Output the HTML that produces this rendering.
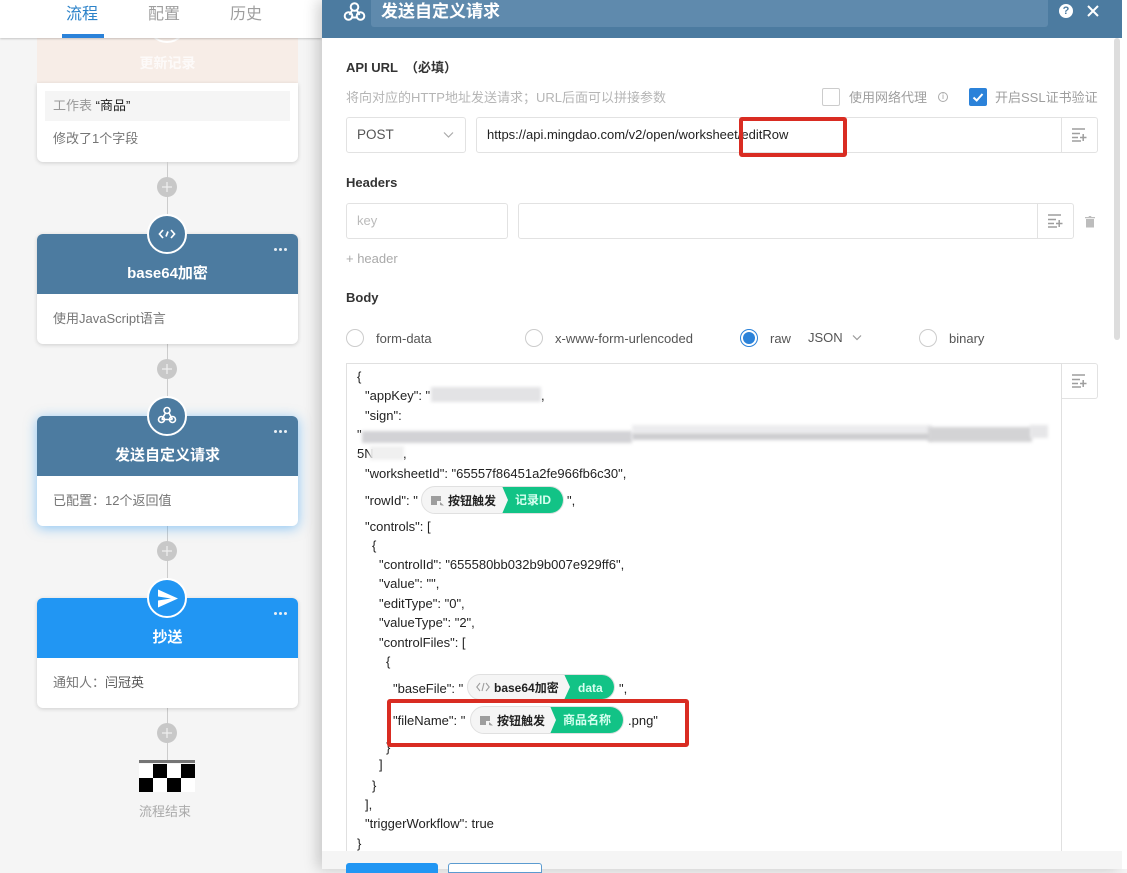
<!DOCTYPE html>
<html lang="zh"><head><meta charset="utf-8"><title>发送自定义请求</title>
<style>
html,body{margin:0;padding:0}
body{width:1127px;height:869px;overflow:hidden;position:relative;background:#f5f5f5;font:13px/20px "Liberation Sans","Noto Sans CJK SC",sans-serif;color:#333}
div,span.a,svg{position:absolute}
.t{position:absolute;white-space:nowrap;line-height:20px;margin-top:1px}
.card{left:37px;width:261px;height:110px;background:#fff;border-radius:6px;box-shadow:0 1px 4px rgba(0,0,0,.16)}
.head{left:0;top:0;width:261px;height:60px;border-radius:6px 6px 0 0;background:#4c7ba0}
.title{left:0;width:261px;top:29px;text-align:center;color:#fff;font-weight:bold;font-size:15px}
.dots{left:237px;top:14px;width:13px;height:4px}
.dots i{position:absolute;top:0;width:3px;height:3px;border-radius:50%;background:#e9eff5}
.ic{left:110px;top:-20px;width:40px;height:40px;box-sizing:border-box;border-radius:50%;border:2px solid #fff;background:#4c7ba0}
.line{left:167px;width:1px;background:#ccc}
.plus{left:157px;width:20px;height:20px;border-radius:50%;background:#c8c8c8}
.box{box-sizing:border-box;background:#fff;border:1px solid #e2e2e2;border-radius:3px}
.lbl{color:#333;font-weight:bold}
.radio{width:18px;height:18px;box-sizing:border-box;border:1px solid #ccc;border-radius:50%;background:#fff}
.code{color:#222;font-size:13px}
.blur{background:#d4d4d6;filter:blur(1.5px)}
.chip{box-sizing:border-box;border:1px solid #e0e0e0;border-radius:15px;background:#f5f5f5;overflow:hidden}
.chip .n{position:absolute;white-space:nowrap;font-weight:bold;font-size:12px;color:#222;line-height:18px}
.chip .w{position:absolute;white-space:nowrap;font-weight:bold;font-size:12px;color:#d7fff0;line-height:18px}
.red{box-sizing:border-box;border:4px solid #d92c22;border-radius:3px}
</style></head><body>

<!-- left panel -->
<div style="left:37px;top:38px;width:261px;height:45px;background:#f7ede7"></div>
<div style="left:147px;top:3px;width:40px;height:40px;box-sizing:border-box;border:2px solid #fff;border-radius:50%"></div>
<div class="t" style="left:37px;width:261px;top:52px;text-align:center;color:#fff;font-weight:bold;font-size:14px;opacity:.75">更新记录</div>
<div style="left:37px;top:83px;width:261px;height:79px;background:#fff;border-radius:0 0 6px 6px;box-shadow:0 1px 4px rgba(0,0,0,.16)"></div>
<div style="left:45px;top:91px;width:245px;height:30px;background:#f5f5f5"></div>
<div class="t" style="left:53px;top:95px;color:#999">工作表 <span style="color:#222">“商品”</span></div>
<div class="t" style="left:53px;top:128px;color:#757575">修改了1个字段</div>

<div class="line" style="top:162px;height:72px"></div>
<div class="line" style="top:344px;height:72px"></div>
<div class="line" style="top:526px;height:72px"></div>
<div class="line" style="top:708px;height:52px"></div>
<div class="plus" style="top:177px"><svg style="left:4px;top:4px" width="12" height="12" viewBox="0 0 12 12" stroke="#eee" stroke-width="1.300"><path d="M1 6h10M6 1v10"/></svg></div>
<div class="plus" style="top:359px"><svg style="left:4px;top:4px" width="12" height="12" viewBox="0 0 12 12" stroke="#eee" stroke-width="1.300"><path d="M1 6h10M6 1v10"/></svg></div>
<div class="plus" style="top:541px"><svg style="left:4px;top:4px" width="12" height="12" viewBox="0 0 12 12" stroke="#eee" stroke-width="1.300"><path d="M1 6h10M6 1v10"/></svg></div>
<div class="plus" style="top:723px"><svg style="left:4px;top:4px" width="12" height="12" viewBox="0 0 12 12" stroke="#eee" stroke-width="1.300"><path d="M1 6h10M6 1v10"/></svg></div>

<div class="card" style="top:234px">
 <div class="head"></div>
 <div class="t title">base64加密</div>
 <div class="dots"><i style="left:0"></i><i style="left:5px"></i><i style="left:10px"></i></div>
 <div class="ic"><svg style="left:8px;top:8px" width="20" height="20" viewBox="0 0 20 20" fill="none" stroke="#fff" stroke-width="1.700"><path d="M6 6 2.500 10 6 14M14 6 17.500 10 14 14M11 7.500 9 12.500"/></svg></div>
 <div class="t" style="left:16px;top:74px;color:#757575">使用JavaScript语言</div>
</div>

<div class="card" style="top:416px;box-shadow:0 2px 12px rgba(33,150,243,.5)">
 <div class="head"></div>
 <div class="t title">发送自定义请求</div>
 <div class="dots"><i style="left:0"></i><i style="left:5px"></i><i style="left:10px"></i></div>
 <div class="ic"><svg style="left:8px;top:7px" width="20" height="20" viewBox="0 0 20 20" fill="none" stroke="#fff" stroke-width="1.600"><circle cx="10" cy="5.500" r="3"/><circle cx="4.500" cy="14.500" r="3"/><circle cx="15.500" cy="14.500" r="3"/><path d="M8.500 8 5 14M12 8l3.500 6.500M4.500 14.500h11"/></svg></div>
 <div class="t" style="left:16px;top:74px;color:#757575">已配置：12个返回值</div>
</div>

<div class="card" style="top:598px">
 <div class="head" style="background:#2196f3"></div>
 <div class="t title">抄送</div>
 <div class="dots"><i style="left:0"></i><i style="left:5px"></i><i style="left:10px"></i></div>
 <div class="ic" style="background:#2196f3"><svg style="left:8px;top:8px" width="22" height="22" viewBox="0 0 22 22"><path d="M1 1.500 21 10.500 1 19.500 1 12.500 14 10.500 1 8.500Z" fill="#fff"/></svg></div>
 <div class="t" style="left:16px;top:74px;color:#757575">通知人：<span style="color:#555">闫冠英</span></div>
</div>

<!-- end flag -->
<div style="left:139px;top:760px;width:56px;height:3px;background:#757575"></div>
<div style="left:139px;top:764px;width:56px;height:28px;background:#fff"></div>
<div style="left:153px;top:764px;width:14px;height:14px;background:#000"></div>
<div style="left:181px;top:764px;width:14px;height:14px;background:#000"></div>
<div style="left:139px;top:778px;width:14px;height:14px;background:#000"></div>
<div style="left:167px;top:778px;width:14px;height:14px;background:#000"></div>
<div class="t" style="left:139px;top:801px;color:#aaa">流程结束</div>

<!-- top tabs -->
<div style="left:0;top:0;width:322px;height:38px;background:#fff;box-shadow:0 1px 2px rgba(0,0,0,.2)"></div>
<div class="t" style="left:66px;top:2px;font-size:16px;color:#2b82c9">流程</div>
<div class="t" style="left:148px;top:2px;font-size:16px;color:#9e9e9e">配置</div>
<div class="t" style="left:230px;top:2px;font-size:16px;color:#9e9e9e">历史</div>
<div style="left:62px;top:34px;width:42px;height:4px;background:#2b82d9"></div>

<!-- right panel -->
<div style="left:322px;top:0;width:800px;height:869px;background:#fff;box-shadow:-4px 0 14px rgba(0,0,0,.2)"></div>
<div style="left:1122px;top:0;width:5px;height:869px;background:#fff"></div>
<div style="left:322px;top:0;width:800px;height:38px;background:#4c7ba0"></div>
<div style="left:371px;top:0;width:677px;height:27px;background:#5f8aad;border-radius:0 0 3px 3px"></div>
<svg style="left:343px;top:1px" width="24" height="22" viewBox="0 0 24 22" fill="none" stroke="#fff" stroke-width="2"><circle cx="11.500" cy="6" r="3.800"/><circle cx="5.500" cy="15" r="3.800"/><circle cx="17.500" cy="15" r="3.800"/><path d="M9 9.500 6.500 14M14 9.500l2.500 4.500M8 16.500h7"/></svg>
<div class="t" style="left:381px;top:0;font-size:17px;font-weight:bold;color:#fff">发送自定义请求</div>
<div style="left:1059px;top:4px;width:14px;height:14px;border-radius:50%;background:#fff;color:#4c7ba0;font-size:11px;font-weight:bold;line-height:14px;text-align:center">?</div>
<svg style="left:1086px;top:4px" width="14" height="14" viewBox="0 0 14 14" stroke="#fff" stroke-width="2"><path d="M2 2 12 12M12 2 2 12"/></svg>

<div style="left:1114px;top:38px;width:6px;height:302px;background:#ddd;border-radius:3px"></div>

<div class="t lbl" style="left:346px;top:57px">API URL &nbsp;（必填）</div>
<div class="t" style="left:346px;top:87px;color:#b5b5b5">将向对应的HTTP地址发送请求；URL后面可以拼接参数</div>
<div style="left:822px;top:88px;width:18px;height:18px;box-sizing:border-box;border:1px solid #ccc;border-radius:2px"></div>
<div class="t" style="left:849px;top:87px;color:#9e9e9e">使用网络代理</div>
<div style="left:938px;top:92px;width:10px;height:10px;box-sizing:border-box;border:1px solid #aaa;border-radius:50%;color:#999;font-size:8px;line-height:8px;text-align:center">i</div>
<div style="left:969px;top:88px;width:18px;height:18px;background:#2b82d9;border-radius:2px"></div>
<svg style="left:969px;top:88px" width="18" height="18" viewBox="0 0 18 18" fill="none" stroke="#fff" stroke-width="2"><path d="M4.500 9.500 7.700 12.500 13.500 6"/></svg>
<div class="t" style="left:995px;top:87px;color:#9e9e9e">开启SSL证书验证</div>

<div class="box" style="left:346px;top:117px;width:120px;height:36px"></div>
<div class="t" style="left:357px;top:124px;color:#555;font-size:13.500px">POST</div>
<svg style="left:442px;top:131px" width="13" height="8" viewBox="0 0 13 8" fill="none" stroke="#aaa" stroke-width="1.200"><path d="M2 1.500 6.500 6 11 1.500"/></svg>
<div class="box" style="left:476px;top:117px;width:622px;height:36px"></div>
<div class="t" style="left:487px;top:124px;color:#222">https://api.mingdao.com/v2/open/worksheet/editRow</div>
<div style="left:1061px;top:118px;width:1px;height:34px;background:#e2e2e2"></div>
<svg style="left:1071px;top:127px" width="16" height="15" viewBox="0 0 16 15" fill="none" stroke="#9e9e9e" stroke-width="1.500"><path d="M1 2h13M1 6.500h8M1 10.500h6M1 14h9M9 10.500h6.500M12.200 7v7"/></svg>

<div class="t lbl" style="left:346px;top:172px">Headers</div>
<div class="box" style="left:346px;top:203px;width:162px;height:36px"></div>
<div class="t" style="left:357px;top:210px;color:#bbb">key</div>
<div class="box" style="left:518px;top:203px;width:556px;height:36px"></div>
<div style="left:1037px;top:204px;width:1px;height:34px;background:#e2e2e2"></div>
<svg style="left:1047px;top:213px" width="16" height="15" viewBox="0 0 16 15" fill="none" stroke="#9e9e9e" stroke-width="1.500"><path d="M1 2h13M1 6.500h8M1 10.500h6M1 14h9M9 10.500h6.500M12.200 7v7"/></svg>
<svg style="left:1084px;top:215px" width="12" height="13" viewBox="0 0 12 13" fill="#bdbdbd"><path d="M1 2h3.500L5 1h2l.5 1H11v1.200H1ZM2 4h8v8.500H2Z"/></svg>
<div class="t" style="left:346px;top:248px;color:#aaa">+ header</div>

<div class="t lbl" style="left:346px;top:287px">Body</div>
<div class="radio" style="left:346px;top:329px"></div>
<div class="t" style="left:376px;top:328px;color:#555">form-data</div>
<div class="radio" style="left:525px;top:329px"></div>
<div class="t" style="left:555px;top:328px;color:#555">x-www-form-urlencoded</div>
<div class="radio" style="left:740px;top:329px;border-color:#2b82d9"></div>
<div style="left:743px;top:332px;width:12px;height:12px;border-radius:50%;background:#2b82d9"></div>
<div class="t" style="left:770px;top:328px;color:#555">raw</div>
<div class="t" style="left:808px;top:327px;color:#555">JSON</div>
<svg style="left:851px;top:334px" width="12" height="8" viewBox="0 0 12 8" fill="none" stroke="#999" stroke-width="1.200"><path d="M2 1.500 6 5.500 10 1.500"/></svg>
<div class="radio" style="left:919px;top:329px"></div>
<div class="t" style="left:949px;top:328px;color:#555">binary</div>

<!-- editor -->
<div style="left:346px;top:363px;width:716px;height:1px;background:#e0e0e0"></div>
<div style="left:346px;top:363px;width:1px;height:488px;background:#e0e0e0"></div>
<div style="left:1061px;top:363px;width:1px;height:488px;background:#e0e0e0"></div>
<div style="left:1062px;top:363px;width:36px;height:36px;box-sizing:border-box;border:1px solid #e2e2e2;border-left:0;border-radius:0 3px 3px 0"></div>
<svg style="left:1071px;top:373px" width="16" height="15" viewBox="0 0 16 15" fill="none" stroke="#9e9e9e" stroke-width="1.500"><path d="M1 2h13M1 6.500h8M1 10.500h6M1 14h9M9 10.500h6.500M12.200 7v7"/></svg>

<div class="t code" style="left:357px;top:366px">{</div>
<div class="t code" style="left:365px;top:385px">"appKey": "</div>
<div class="blur" style="left:431px;top:387px;width:110px;height:15px;background:#e3e3e5"></div>
<div class="t code" style="left:541px;top:385px">,</div>
<div class="t code" style="left:365px;top:405px">"sign":</div>
<div class="t code" style="left:357px;top:424px">"</div>
<div class="blur" style="left:362px;top:431px;width:270px;height:12px;background:#d2d2d5"></div>
<div class="blur" style="left:632px;top:425px;width:300px;height:8px;background:#ececee"></div>
<div class="blur" style="left:632px;top:433px;width:300px;height:7px;background:#cdcdd0"></div>
<div class="blur" style="left:928px;top:427px;width:104px;height:15px;background:#d3d3d5"></div>
<div class="blur" style="left:1030px;top:425px;width:18px;height:13px;background:#e6e6e8"></div>
<div class="t code" style="left:357px;top:443px">5N</div>
<div class="blur" style="left:370px;top:446px;width:34px;height:14px;background:#f0f0f0"></div>
<div class="t code" style="left:403px;top:443px">,</div>
<div class="t code" style="left:365px;top:463px">"worksheetId": "65557f86451a2fe966fb6c30",</div>
<div class="t code" style="left:365px;top:490px">"rowId": "</div>
<div class="chip" style="left:421px;top:486px;width:143px;height:28px">
 <svg style="left:9px;top:9px" width="14" height="10" viewBox="0 0 14 10" fill="#9e9e9e"><path d="M0 0h10v5H6V9H0Z"/><path d="M9 6l4 3.500-2 0L9 9z"/></svg>
 <span class="n" style="left:26px;top:5px">按钮触发</span>
 <svg style="left:80px;top:-1px" width="62" height="28" viewBox="0 0 62 28"><path d="M0 0H48A14 14 0 0 1 48 28H0L6 14Z" fill="#12c386"/></svg>
 <span class="w" style="left:93px;top:4px">记录ID</span>
</div>
<div class="t code" style="left:567px;top:490px">",</div>
<div class="t code" style="left:365px;top:516px">"controls": [</div>
<div class="t code" style="left:372px;top:535px">{</div>
<div class="t code" style="left:379px;top:554px">"controlId": "655580bb032b9b007e929ff6",</div>
<div class="t code" style="left:379px;top:573px">"value": "",</div>
<div class="t code" style="left:379px;top:593px">"editType": "0",</div>
<div class="t code" style="left:379px;top:612px">"valueType": "2",</div>
<div class="t code" style="left:379px;top:632px">"controlFiles": [</div>
<div class="t code" style="left:386px;top:651px">{</div>
<div class="t code" style="left:393px;top:678px">"baseFile": "</div>
<div class="chip" style="left:467px;top:674px;width:148px;height:26px">
 <svg style="left:8px;top:7px" width="14" height="10" viewBox="0 0 14 10" fill="none" stroke="#9e9e9e" stroke-width="1.100"><path d="M4 1 .8 5 4 9M10 1l3.200 4L10 9M8 1 6 9"/></svg>
 <span class="n" style="left:26px;top:4px">base64加密</span>
 <svg style="left:96px;top:-1px" width="52" height="26" viewBox="0 0 52 26"><path d="M0 0H39A13 13 0 0 1 39 26H0L6 13Z" fill="#12c386"/></svg>
 <span class="w" style="left:110px;top:4px">data</span>
</div>
<div class="t code" style="left:619px;top:678px">",</div>
<div class="t code" style="left:393px;top:710px">"fileName": "</div>
<div class="chip" style="left:470px;top:706px;width:154px;height:28px">
 <svg style="left:9px;top:9px" width="14" height="10" viewBox="0 0 14 10" fill="#9e9e9e"><path d="M0 0h10v5H6V9H0Z"/><path d="M9 6l4 3.500-2 0L9 9z"/></svg>
 <span class="n" style="left:26px;top:5px">按钮触发</span>
 <svg style="left:79px;top:-1px" width="74" height="28" viewBox="0 0 74 28"><path d="M0 0H60A14 14 0 0 1 60 28H0L6 14Z" fill="#12c386"/></svg>
 <span class="w" style="left:92px;top:4px">商品名称</span>
</div>
<div class="t code" style="left:628px;top:710px">.png"</div>
<div class="t code" style="left:386px;top:737px">}</div>
<div class="t code" style="left:379px;top:754px">]</div>
<div class="t code" style="left:372px;top:775px">}</div>
<div class="t code" style="left:365px;top:794px">],</div>
<div class="t code" style="left:365px;top:813px">"triggerWorkflow": true</div>
<div class="t code" style="left:357px;top:833px">}</div>

<!-- footer -->
<div style="left:322px;top:851px;width:800px;height:18px;background:#f5f5f5"></div>
<div style="left:346px;top:863px;width:92px;height:10px;background:#2196f3;border-radius:3px 3px 0 0"></div>
<div style="left:448px;top:863px;width:94px;height:10px;box-sizing:border-box;border:1px solid #5b9bd0;border-radius:3px 3px 0 0;background:#fff"></div>

<!-- red annotations -->
<div class="red" style="left:739px;top:117px;width:108px;height:40px"></div>
<div class="red" style="left:387px;top:699px;width:302px;height:48px"></div>

<!-- tab text offsets -->
<style>.t[style*="top:2px"]{margin-top:3px}.t[style*="left:381px"]{margin-top:2px}</style>
</body></html>
